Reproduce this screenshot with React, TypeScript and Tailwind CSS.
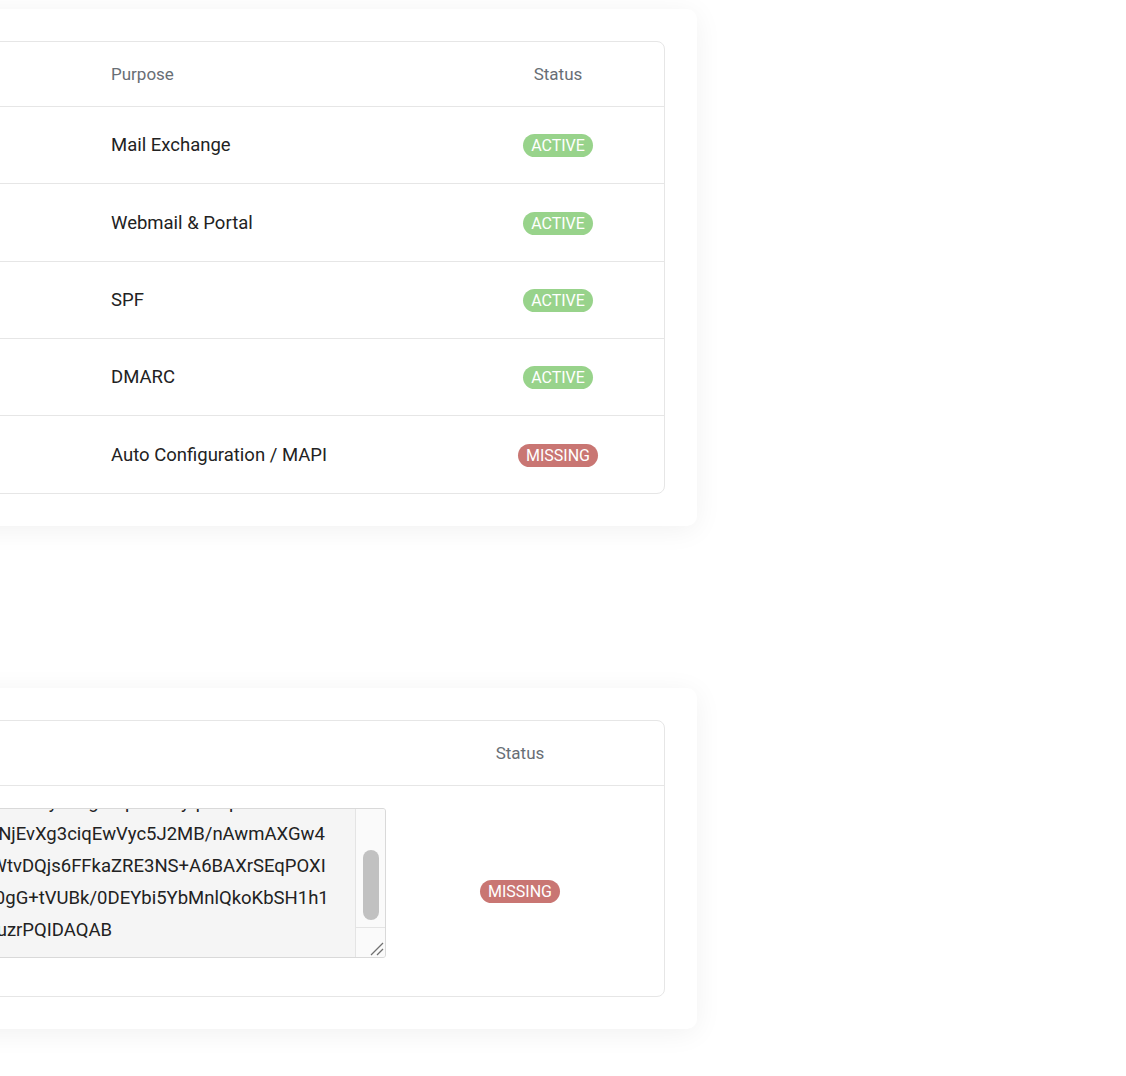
import React, { useEffect, useRef } from 'react';

type DnsRecord = {
  type: string;
  host: string;
  purpose: string;
  status: 'ACTIVE' | 'MISSING';
};

const records: DnsRecord[] = [
  { type: 'MX', host: 'mail.example.com', purpose: 'Mail Exchange', status: 'ACTIVE' },
  { type: 'A', host: 'webmail.example.com', purpose: 'Webmail & Portal', status: 'ACTIVE' },
  { type: 'TXT', host: 'example.com', purpose: 'SPF', status: 'ACTIVE' },
  { type: 'TXT', host: '_dmarc.example.com', purpose: 'DMARC', status: 'ACTIVE' },
  { type: 'CNAME', host: 'autodiscover.example.com', purpose: 'Auto Configuration / MAPI', status: 'MISSING' },
];

// row heights taken from the screenshot (they include the top border)
const rowHeights = ['h-[77px]', 'h-[78px]', 'h-[77px]', 'h-[77px]', 'h-[78px]'];

const dkimKey = [
  'v=DKIM1; k=rsa; p=MIIBIjANBgkqhkiG9w0BAQEFAAOCAQ8AMIIBCgKCAQEAx7mQ',
  'Hk2TbRa8LmcZ0sWq4Nd1Fe9UvXj7o3KpYgCi5Ay6Bt2Ljq8RnPhOy1uTg4Mpw9Ksyq0Dfp',
  'Qa7LcR2mZ9tUeK4bW1xFs0oHp3VgY6nDiT8jMa5XrBq2CwNjEvXg3ciqEwVyc5J2MB/nAwmAXGw4',
  'Tn4ki3KsR9pLe0cYa2MvH7qBd5Ux1WgZo3FjNi8Ck6Rt4ESWtvDQjs6FFkaZRE3NS+A6BAXrSEqPOXI',
  'Le5Zr2HtqK8Ya1NcP4uW6mBs3Dv9Xg0JfO7Ri2Mk5TpDJh0gG+tVUBk/0DEYbi5YbMnlQkoKbSH1h1',
  'Fa8Wq3LoN1cYt6KeR0mZs5Hp2Bv9Ux4GjD7Ci3Mk1TnGwruzrPQIDAQAB',
].join('\n');

const Badge: React.FC<{ status: DnsRecord['status'] }> = ({ status }) => (
  <span
    className={`inline-block rounded-full px-2 text-[16px] leading-[23px] text-white ${
      status === 'ACTIVE' ? 'bg-[#98d38b]' : 'bg-[#c97673]'
    }`}
  >
    {status}
  </span>
);

// textarea with a drawn scrollbar, the browser hides the real one
const KeyBox: React.FC<{ value: string }> = ({ value }) => {
  const ref = useRef<HTMLTextAreaElement>(null);

  useEffect(() => {
    if (ref.current) ref.current.scrollTop = ref.current.scrollHeight;
  }, []);

  return (
    <div className="flex h-[150px] overflow-hidden rounded-[3px] border border-[#d9d9d9] bg-[#f5f5f5]">
      <textarea
        ref={ref}
        readOnly
        defaultValue={value}
        className="h-full min-w-0 flex-1 resize-none overflow-hidden bg-transparent px-3 pt-3 pb-[11px] text-[18.5px] leading-8 text-[#222] outline-none"
      />
      <div className="flex w-[30px] flex-col border-l border-[#e4e4e4] bg-[#fafafa]">
        <div className="flex flex-1 flex-col justify-end pb-[7px] pl-[7px]">
          <div className="h-[70px] w-4 rounded-full bg-[#c1c1c1]" />
        </div>
        <div className="flex h-[30px] items-end justify-end border-t border-[#e4e4e4] pr-px pb-px">
          <svg width="15" height="15" viewBox="0 0 15 15" fill="none" stroke="#707070" strokeWidth="1.2">
            <path d="M14 2 L2 14" />
            <path d="M14 8 L8 14" />
          </svg>
        </div>
      </div>
    </div>
  );
};

const App: React.FC = () => {
  return (
    <div className="min-h-screen overflow-hidden bg-white pt-[9px] font-['Roboto',sans-serif]">
      {/* DNS records */}
      <div className="-ml-[560px] w-[1257px] rounded-[10px] bg-white p-8 shadow-[0_4px_28px_rgba(0,0,0,0.06)]">
        <div className="rounded-lg border border-[#e6e6e6]">
          <div className="grid h-[64px] grid-cols-[160px_454px_365px_212px] items-center pt-[2px] text-[17px] text-[#686e75]">
            <div className="px-6">Type</div>
            <div className="px-6">Host</div>
            <div className="px-6">Purpose</div>
            <div className="px-6 text-center">Status</div>
          </div>
          {records.map((r, i) => (
            <div
              key={r.purpose}
              className={`grid ${rowHeights[i]} grid-cols-[160px_454px_365px_212px] items-center border-t border-[#e6e6e6] pt-[2px] text-[18.5px] text-[#222]`}
            >
              <div className="px-6">{r.type}</div>
              <div className="px-6">{r.host}</div>
              <div className="px-6">{r.purpose}</div>
              <div className="px-6 text-center">
                <Badge status={r.status} />
              </div>
            </div>
          ))}
        </div>
      </div>

      {/* DKIM */}
      <div className="-ml-[560px] mt-[162px] w-[1257px] rounded-[10px] bg-white p-8 shadow-[0_4px_28px_rgba(0,0,0,0.06)]">
        <div className="rounded-lg border border-[#e6e6e6]">
          <div className="grid h-[64px] grid-cols-[937px_220px_34px] items-center pt-[2px] text-[17px] text-[#686e75]">
            <div className="px-6">DKIM Public Key</div>
            <div className="text-center">Status</div>
            <div />
          </div>
          <div className="grid h-[211px] grid-cols-[937px_220px_34px] border-t border-[#e6e6e6]">
            <div className="pt-[22px] pr-6 pl-5">
              <KeyBox value={dkimKey} />
            </div>
            <div className="flex items-center justify-center">
              <Badge status="MISSING" />
            </div>
            <div />
          </div>
        </div>
      </div>
    </div>
  );
};

export default App;
